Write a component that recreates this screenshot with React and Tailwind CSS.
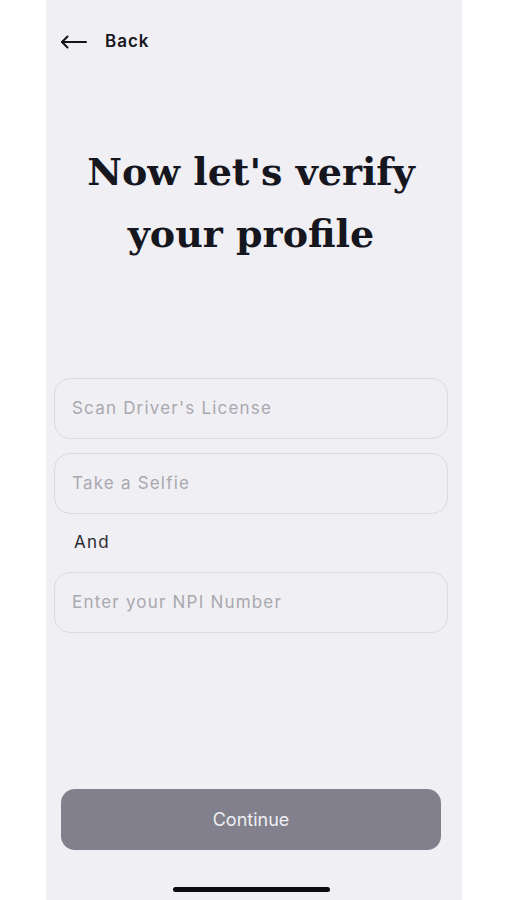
import React from "react";

const sans = { fontFamily: "Inter, 'Open Sans', sans-serif" };

const Field = ({ label }) => (
  <div className="h-[61px] rounded-[16px] border border-[#dcdbe1] flex items-center pl-[17px] text-[17px] tracking-[1.2px] text-[#a9a8ae]">
    {label}
  </div>
);

export default function App() {
  return (
    <div className="min-h-[900px] bg-white flex" style={sans}>
      <div className="ml-[46px] w-[416px] h-[900px] bg-[#f0eff4] flex flex-col">
        <div className="pt-[32px] pl-[14px] h-[52px] flex items-center">
          <svg width="27" height="14" viewBox="0 0 27 14" fill="none" stroke="#141418" strokeWidth="2" strokeLinecap="round" strokeLinejoin="round">
            <path d="M26 7H2" />
            <path d="M7.5 1.5L2 7l5.5 5.5" />
          </svg>
          <span className="ml-[18px] text-[17px] font-semibold tracking-[1px] text-[#17171c]">Back</span>
        </div>

        <h1
          className="mt-[89px] pr-[6px] text-center text-[38px] leading-[62px] font-bold text-[#16161f]"
          style={{ fontFamily: "'DejaVu Serif', serif" }}
        >
          Now let's verify
          <br />
          your profile
        </h1>

        <div className="mt-[113px] ml-[8px] mr-[14px] flex flex-col">
          <Field label="Scan Driver's License" />
          <div className="mt-[14px]">
            <Field label="Take a Selfie" />
          </div>
          <div className="h-[58px] flex items-center pl-[20px] text-[17px] tracking-[1.2px] text-[#2a2a30]">And</div>
          <Field label="Enter your NPI Number" />
        </div>

        <div className="flex-1" />

        <button className="ml-[15px] w-[380px] h-[61px] rounded-[14px] bg-[#81808c] text-[#efeff3] text-[18px]">
          Continue
        </button>

        <div className="mt-[37px] mb-[8px] ml-[127px] w-[157px] h-[5px] rounded-full bg-[#0c0c0e]" />
      </div>
    </div>
  );
}
